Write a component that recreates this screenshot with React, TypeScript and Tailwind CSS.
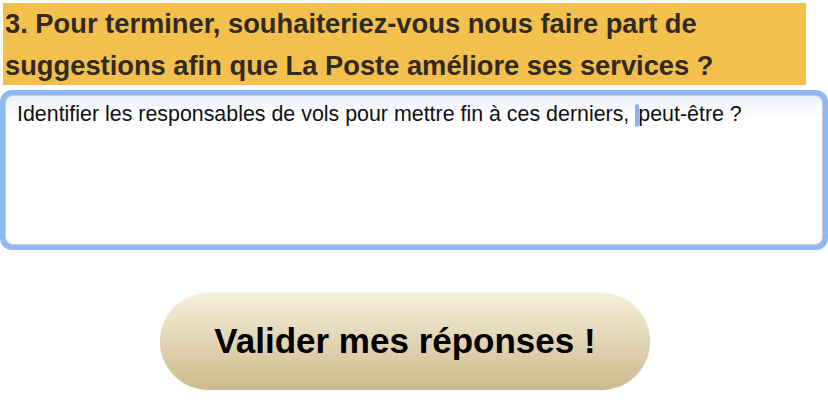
const question =
  "3. Pour terminer, souhaiteriez-vous nous faire part de suggestions afin que La Poste améliore ses services ?";

export default function App() {
  return (
    <div className="w-[828px] h-[407px] bg-white overflow-hidden font-['Liberation_Sans',Arial,sans-serif]">
      <div className="pt-[3px] pl-[3px] w-[806px]">
        <h2 className="h-[82px] bg-[#f3c04e] pl-[2px] pr-[60px] text-[27.3px] leading-[42px] font-bold text-[#302a22]">
          {question}
        </h2>
      </div>
      <div className="mt-[5px] h-[160px] rounded-[12px] bg-[#8fb9f3] p-[5px]">
        <div className="h-full rounded-[8px] border border-[#c9ccd2] bg-gradient-to-b from-[#eef1fb] to-white to-[22px] px-[11px] pt-[4px] text-[21.4px] leading-[28px] text-[#111]">
          Identifier les responsables de vols pour mettre fin à ces derniers,{" "}
          <span className="inline-block w-[4px] h-[23px] align-[-6px] rounded-[2px] bg-[#8fb4ec] -mr-[1px]" />
          peut-être ?
        </div>
      </div>
      <div className="flex justify-center pt-[43px] pr-[18px]">
        <button className="w-[490px] h-[97px] rounded-full bg-gradient-to-b from-[#f6eedb] to-[#cdbb8c] shadow-[0_0_2px_rgba(0,0,0,0.08)] text-[35px] font-bold text-black">
          Valider mes réponses !
        </button>
      </div>
    </div>
  );
}
